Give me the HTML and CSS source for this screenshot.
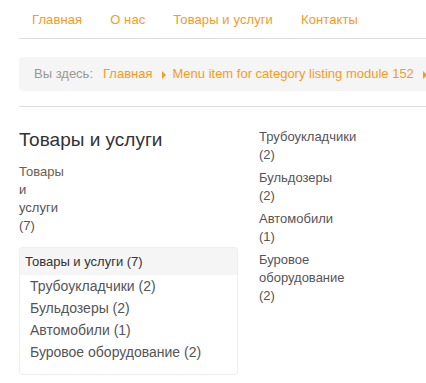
FILE: index.html
```html
<!DOCTYPE html>
<html>
<head>
<meta charset="UTF-8">
<title>Товары и услуги</title>
<link rel="stylesheet" href="styles.css">
</head>
<body>
<div class="page">
	<ul class="menu">
		<li><a href="#">Главная</a></li>
		<li><a href="#">О нас</a></li>
		<li><a href="#">Товары и услуги</a></li>
		<li><a href="#">Контакты</a></li>
	</ul>

	<div class="breadcrumb">
		<span class="here">Вы здесь:</span>
		<a href="#">Главная</a><span class="arrow"></span>
		<a href="#">Menu item for category listing module 152</a><span class="arrow"></span>
	</div>

	<div class="content">
		<div class="main">
			<h2>Товары и услуги</h2>
			<div class="cat-narrow">
				<a href="#" class="cat-link">Товары</a> и услуги (7)
			</div>

			<div class="cat-box">
				<div class="cat-title">Товары и услуги (7)</div>
				<ul>
					<li>Трубоукладчики (2)</li>
					<li>Бульдозеры (2)</li>
					<li>Автомобили (1)</li>
					<li>Буровое оборудование (2)</li>
				</ul>
			</div>
		</div>

		<div class="side">
			<ul>
				<li>Трубоукладчики <span class="count">(2)</span></li>
				<li>Бульдозеры <span class="count">(2)</span></li>
				<li>Автомобили <span class="count">(1)</span></li>
				<li>Буровое оборудование <span class="count">(2)</span></li>
			</ul>
		</div>
	</div>
</div>
</body>
</html>
```

FILE: styles.css
```css
html, body{
	margin:0;
	overflow:hidden;
}
body{
	font-family:"Liberation Sans", Arial, sans-serif;
	font-size:13px;
	line-height:18px;
	color:#555;
	background:#fff;
}
a{
	color:#f39c1e;
	text-decoration:none;
}
.page{
	width:460px;
	padding-left:19px;
}

/* menu de arriba */
.menu{
	display:flex;
	margin:0;
	padding:0;
	list-style:none;
	border-bottom:1px solid #ddd;
}
.menu a{
	display:block;
	padding:11px 14px 9px 14px;
	font-size:13px;
	letter-spacing:0.1px;
}
.menu li:first-child a{
	padding-left:13px;
}

/* migas */
.breadcrumb{
	display:flex;
	align-items:center;
	margin-top:18px;
	padding:8px 15px;
	background:#f5f5f5;
	border-radius:4px;
	white-space:nowrap;
}
.here{
	color:#999;
	margin-right:10px;
}
.arrow{
	flex:none;
	width:0;
	height:0;
	margin:2px 7px 0 9px;
	border-top:4px solid transparent;
	border-bottom:4px solid transparent;
	border-left:4px solid #f39c1e;
}

.content{
	display:flex;
	margin-top:15px;
	border-top:1px solid #ddd;
	padding-top:21px;
}
.main{
	width:219px;
}
.main h2{
	margin:0;
	font-size:19px;
	line-height:23px;
	font-weight:normal;
	color:#333;
}
.cat-narrow{
	width:46px;
	margin-top:12px;
}
.cat-link{
	color:#6d5d4c;
}

.cat-box{
	margin-top:12px;
	border:1px solid #eee;
	border-radius:3px;
	padding-bottom:11px;
}
.cat-title{
	background:#f5f5f5;
	color:#333;
	padding:5px 5px 4px;
}
.cat-box ul{
	list-style:none;
	margin:0;
	padding:0 0 0 10px;
}
.cat-box li{
	font-size:14px;
	line-height:22px;
}

.side{
	margin-left:21px;
	width:115px;
}
.side ul{
	list-style:none;
	margin:0;
	padding:0;
}
.side li{
	margin-bottom:5px;
}
.count{
	display:block;
}
```
